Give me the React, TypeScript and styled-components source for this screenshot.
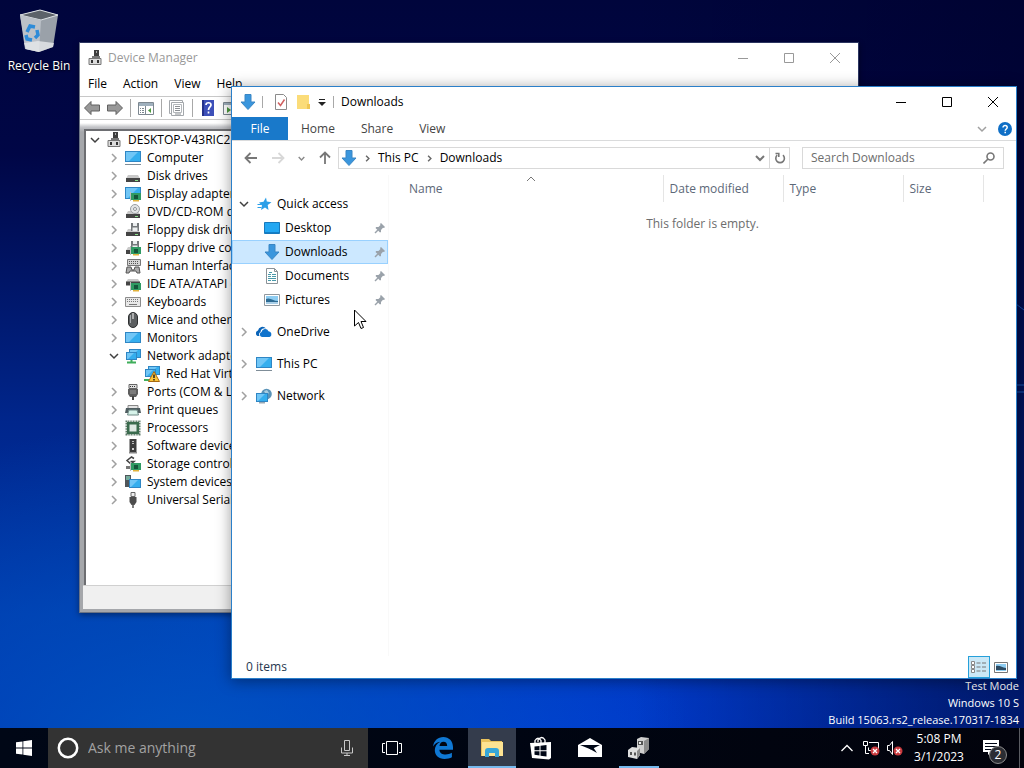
import React from "react";
import styled, { createGlobalStyle } from "styled-components";

const GlobalStyle = createGlobalStyle`
  * { box-sizing: border-box; }
  body {
    margin: 0;
    font-family: "Open Sans", "Noto Sans", sans-serif;
    font-size: 12px;
    line-height: 18px;
    color: #000;
  }
  button, input {
    margin: 0;
    padding: 0;
    border: 0;
    background: none;
    font: inherit;
    color: inherit;
  }
  svg { display: block; flex: none; }
`;

/* ---------- desktop ---------- */

const Screen = styled.div`
  display: flex;
  flex-direction: column;
  min-height: 100vh;
  background:
    linear-gradient(90deg, rgba(0, 0, 30, 0) 62%, rgba(0, 0, 40, 0.5) 100%),
    radial-gradient(ellipse 50% 45% at 18% 100%, rgba(0, 88, 196, 0.9), rgba(0, 70, 190, 0) 100%),
    radial-gradient(ellipse 45% 45% at 55% 100%, rgba(0, 62, 214, 0.9), rgba(0, 40, 190, 0) 100%),
    linear-gradient(180deg, #00053c 0%, #000646 20%, #00268c 55%, #0036aa 80%, #002cb0 100%);
`;

const Workspace = styled.main`
  position: relative;
  flex: 1;
  overflow: hidden;
`;

const DesktopIcon = styled.button`
  position: absolute;
  top: 8px;
  left: 1px;
  width: 76px;
  display: flex;
  flex-direction: column;
  align-items: center;
  gap: 3px;
  color: #fff;
  white-space: nowrap;
  text-shadow: 0 1px 2px #000;
`;

const LightStreaks = styled.svg`
  position: absolute;
  top: 300px;
  right: 0;
`;

const Watermark = styled.div`
  position: absolute;
  right: 5px;
  bottom: 0;
  color: #fff;
  font-size: 11px;
  text-align: right;
  line-height: 17px;
`;

const Pointer = styled.svg`
  position: absolute;
  left: 354px;
  top: 309px;
`;

/* ---------- window parts ---------- */

const TitleBar = styled.header<{ $muted?: boolean }>`
  display: flex;
  align-items: center;
  height: 30px;
  flex: none;
  color: ${(p) => (p.$muted ? "#999" : "#000")};
`;

const TitleText = styled.h1`
  flex: 1;
  margin: 0;
  font-size: 12px;
  font-weight: 400;
`;

const WindowButton = styled.button`
  display: flex;
  align-items: center;
  justify-content: center;
  width: 46px;
  height: 30px;
`;

const Chevron = ({ dir = "right", size = 9, color = "#a0a0a0", weight = 1.5 }: {
  dir?: "right" | "down" | "up"; size?: number; color?: string; weight?: number;
}) => {
  const d = { right: "M3 1l4 4-4 4", down: "M1 3l4 4 4-4", up: "M1 7l4-4 4 4" }[dir];
  return (
    <svg width={size} height={size} viewBox="0 0 10 10" fill="none" stroke={color} strokeWidth={weight}>
      <path d={d} />
    </svg>
  );
};

const WindowButtons = () => (
  <>
    <WindowButton aria-label="Minimize">
      <svg width="10" height="10" stroke="currentColor" fill="none"><path d="M0 5.5h10" /></svg>
    </WindowButton>
    <WindowButton aria-label="Maximize">
      <svg width="10" height="10" stroke="currentColor" fill="none"><path d="M.5.5h9v9h-9z" /></svg>
    </WindowButton>
    <WindowButton aria-label="Close">
      <svg width="10" height="10" stroke="currentColor" fill="none"><path d="M0 0l10 10M10 0L0 10" /></svg>
    </WindowButton>
  </>
);

/* ---------- device manager ---------- */

const DeviceWindow = styled.section`
  position: absolute;
  left: 79px;
  top: 42px;
  right: 165px;
  bottom: 115px;
  display: flex;
  flex-direction: column;
  border: 1px solid #6a7384;
  border-top-color: #2b3560;
  border-right-color: #2b3560;
  background: #fff;
  box-shadow: 0 2px 6px rgba(0, 0, 0, 0.4);
`;

const DeviceTitle = styled.div`
  display: flex;
  padding: 0 7px;
  width: 28px;
`;

const MenuBar = styled.nav`
  display: flex;
  height: 23px;
  align-items: center;
  padding-bottom: 2px;
`;

const MenuItem = styled.button`
  padding: 0 8px;
`;

const Tools = styled.div`
  display: flex;
  align-items: center;
  gap: 7px;
  height: 24px;
  padding-left: 4px;
  border-top: 1px solid #c8c8c8;
  border-bottom: 1px solid #c8c8c8;
`;

const Separator = styled.span<{ $height?: number }>`
  width: 1px;
  height: ${(p) => p.$height ?? 18}px;
  background: #a8a8a8;
`;

const DeviceBody = styled.div`
  flex: 1;
  display: flex;
  flex-direction: column;
  padding: 0 3px 3px;
  background: linear-gradient(180deg, #fff 0, #fff 3px, #c4c5c9 7px, #a5a7ab 12px, #a5a7ab 100%);
`;

const Tree = styled.ul`
  flex: 1;
  margin: 9px 0 0 1px;
  padding: 0;
  list-style: none;
  background: #fff;
  border-top: 2px solid #6d6e72;
  border-left: 2px solid #6d6e72;
`;

const TreeRow = styled.li<{ $level: number }>`
  display: flex;
  align-items: center;
  gap: 6px;
  height: 18px;
  padding-left: ${(p) => [4, 23, 58][p.$level]}px;
  white-space: nowrap;
`;

const TreeToggle = styled.button`
  display: flex;
  flex: none;
  justify-content: center;
  width: 10px;
`;

const DeviceStatus = styled.footer`
  height: 24px;
  background: #f0f0f0;
  border-top: 1px solid #d0d0d0;
`;

const Icon = ({ children, size = 16, box = 16 }: { children: React.ReactNode; size?: number; box?: number }) => (
  <svg width={size} height={size} viewBox={`0 0 ${box} ${box}`} aria-hidden="true">{children}</svg>
);

const Screen16 = ({ x = 0, y = 2, w = 16, h = 11 }) => (
  <>
    <path d={`M${x} ${y}h${w}v${h}h-${w}z`} fill="#2f86c4" />
    <path d={`M${x + 1} ${y + 1}h${w - 2}v${h - 2}h-${w - 2}z`} fill="#35aeee" />
    <path d={`M${x + 1} ${y + 1}h${w - 4}l-${h - 2} ${h - 2}h-${w - 2 - h}z`} fill="#71c6f6" />
  </>
);

const Drive = () => (
  <>
    <path d="M3 7h10l2 3.500H1z" fill="#c9c9c9" />
    <path d="M1 10h14v4H1z" fill="#444" />
    <path d="M10 12h3v1h-3z" fill="#8ce08c" />
  </>
);

const Board = () => (
  <>
    <path d="M6 7h10v7H6z" fill="#2f9a63" />
    <path d="M5 6h1v9H5z" fill="#bdbdbd" />
    <path d="M9 9h4v4H9z" fill="#14553a" />
    <path d="M8 14h6v1.500H8z" fill="#e2b33c" />
  </>
);

const Floppy = () => (
  <>
    <path d="M6 1h8v8H6z" fill="#75797b" />
    <path d="M8 1h4v3H8zM7.500 5.500h5V9h-5z" fill="#eceff0" />
  </>
);

const glyphs: Record<string, React.ReactNode> = {
  root: (
    <>
      <path d="M7 0h5v7H7z" fill="#3e3e3e" /><path d="M9 1h1v2H9z" fill="#aaa" />
      <path d="M5 6h8v3H5z" fill="#777" />
      <path d="M2 8.500h12v6H2z" fill="#dcdcdc" stroke="#777" />
      <path d="M4 10h2v3H4zM10 10h2v3h-2z" fill="#333" />
    </>
  ),
  computer: (<><Screen16 y={1} h={11} /><path d="M0 14h16v1H0z" fill="#7f8d98" /></>),
  disk: <Drive />,
  display: (<><Screen16 y={1} h={12} /><Board /></>),
  dvd: (
    <>
      <Drive />
      <circle cx="10" cy="5" r="4.500" fill="#e3e5e6" stroke="#9a9ea1" />
      <circle cx="10" cy="5" r="1.500" fill="#fff" stroke="#8d9194" />
    </>
  ),
  floppy: (<><Drive /><Floppy /></>),
  floppyController: (<><Drive /><Floppy /><Board /></>),
  hid: (
    <>
      <path d="M2.500 1.500h13v6h-13z" fill="#d5d5d5" stroke="#777" />
      <path d="M4 3.500h10M4 5.500h10" stroke="#555" strokeDasharray="1 1" />
      <path d="M1 15l1-6h4l1 3h2l1-3h4l1 6h-3l-1-2H5l-1 2z" fill="#ababab" stroke="#555" />
    </>
  ),
  ide: (
    <>
      <path d="M3 3h10l2 3H1z" fill="#c9c9c9" /><path d="M1 5.500h14v4H1z" fill="#444" /><Board />
    </>
  ),
  keyboard: (
    <>
      <path d="M.5 3.500h15v9H.5z" fill="#e8e8e8" stroke="#8c8c8c" />
      <path d="M2 5.500h12M2 7.500h12" stroke="#777" strokeDasharray="1 1" /><path d="M4 10.500h8" stroke="#777" />
    </>
  ),
  mouse: (
    <>
      <rect x="3.500" y=".5" width="9" height="15" rx="4.500" fill="#5c5f61" stroke="#2d2f30" />
      <path d="M8 1v6" stroke="#fff" /><path d="M5.500 3v8" stroke="#a8acae" />
    </>
  ),
  monitor: <Screen16 />,
  network: (
    <>
      <Screen16 x={4} y={1} w={12} h={9} /><Screen16 x={1} y={4} w={11} h={8} />
      <path d="M2 14.500h9M6.500 12v3" stroke="#3fae5a" strokeWidth="2" />
    </>
  ),
  warning: (
    <>
      <Screen16 x={4} y={0} w={12} h={9} /><Screen16 x={1} y={3} w={11} h={8} />
      <path d="M0 14h5" stroke="#3fae5a" strokeWidth="2" />
      <path d="M10 5.500l5.500 10h-11z" fill="#fbc53a" stroke="#a86a10" />
      <path d="M10 8.500v3.500M10 13v1.500" stroke="#222" strokeWidth="1.500" />
    </>
  ),
  port: (
    <>
      <path d="M4 .5h8v4H4z" fill="#e0e0e0" stroke="#666" /><path d="M5 2.500h6" stroke="#333" strokeDasharray="1 1" />
      <path d="M3 5h10v5l-2 3H5l-2-3z" fill="#5e5e5e" /><path d="M5 7h6M5 9h6" stroke="#999" />
      <path d="M8 12v4" stroke="#444" strokeWidth="2" />
    </>
  ),
  printer: (
    <>
      <path d="M3 3.500h10v3H3z" fill="#e4e4e4" stroke="#888" />
      <path d="M1 6h14l1 5h-3l-1-3H4l-1 3H0z" fill="#4f5d60" /><path d="M4 8h8l1.500 5h-11z" fill="#d7f3ea" stroke="#6f8a86" />
    </>
  ),
  cpu: (
    <>
      <path d="M1.500 1.500h13v13h-13z" fill="none" stroke="#5d7a68" strokeWidth="2" strokeDasharray="1 .6" />
      <path d="M2 2h12v12H2z" fill="#3a6b4d" /><path d="M4.500 4.500h7v7h-7z" fill="#dfe9e3" />
    </>
  ),
  software: (
    <>
      <path d="M4.500 1h7v13h-7z" fill="#3c3c3c" /><path d="M7 3.500h2M7 5.500h2" stroke="#bbb" />
      <path d="M4 14h8v1.500H4z" fill="#888" /><circle cx="8" cy="11" r="1" fill="#fff" />
    </>
  ),
  storage: (
    <>
      <path d="M9 2.500L6.500 1 2 4.500 6 8l3-2.500H5.500" fill="none" stroke="#444" strokeWidth="1.500" /><Board />
      <path d="M1 10h4v3H1z" fill="#777" />
    </>
  ),
  system: (
    <>
      <path d="M0 1h6v12H0z" fill="#50565a" /><path d="M1 3h4M1 5h4" stroke="#9fd" /><Screen16 x={4} y={5} w={12} h={9} />
    </>
  ),
  usb: (
    <>
      <path d="M6 .5h4v4H6z" fill="#eee" stroke="#666" /><path d="M4.500 5h7v5l-2 3h-3l-2-3z" fill="#4c4c4c" />
      <path d="M8 12v4" stroke="#555" strokeWidth="1.500" />
    </>
  ),
};

type Device = { name: string; icon: string; level?: number; open?: boolean };

const devices: Device[] = [
  { name: "DESKTOP-V43RIC2", icon: "root", level: 0, open: true },
  { name: "Computer", icon: "computer" },
  { name: "Disk drives", icon: "disk" },
  { name: "Display adapters", icon: "display" },
  { name: "DVD/CD-ROM drives", icon: "dvd" },
  { name: "Floppy disk drives", icon: "floppy" },
  { name: "Floppy drive controllers", icon: "floppyController" },
  { name: "Human Interface Devices", icon: "hid" },
  { name: "IDE ATA/ATAPI controllers", icon: "ide" },
  { name: "Keyboards", icon: "keyboard" },
  { name: "Mice and other", icon: "mouse" },
  { name: "Monitors", icon: "monitor" },
  { name: "Network adapters", icon: "network", open: true },
  { name: "Red Hat VirtIO", icon: "warning", level: 2 },
  { name: "Ports (COM & LPT)", icon: "port" },
  { name: "Print queues", icon: "printer" },
  { name: "Processors", icon: "cpu" },
  { name: "Software devices", icon: "software" },
  { name: "Storage controllers", icon: "storage" },
  { name: "System devices", icon: "system" },
  { name: "Universal Serial Bus controllers", icon: "usb" },
];

const ToolArrow = ({ back }: { back?: boolean }) => (
  <svg width="16" height="16" viewBox="0 0 16 16">
    <path d={back ? "M.5 8L7 1.500v3.500h8.500v6H7v3.500z" : "M15.500 8L9 1.500v3.500H.5v6H9v3.500z"} fill="#989898" stroke="#606060" />
  </svg>
);

const PanelGlyph = () => (
  <svg width="16" height="16" viewBox="0 0 16 16">
    <path d="M.5 2.500h15v12H.5z" fill="#fff" stroke="#7d8790" /><path d="M1 3h14v3H1z" fill="#9fb0bd" />
    <path d="M2 8.500h4M2 10.500h4M2 12.500h4" stroke="#7d8790" strokeDasharray="1 1 2" /><path d="M7.500 6v8" stroke="#7d8790" />
    <path d="M13 8v5l-3-2.500z" fill="#4c9a3c" />
  </svg>
);

const DeviceManager = () => (
  <DeviceWindow aria-label="Device Manager">
    <TitleBar $muted>
      <DeviceTitle><Icon>{glyphs.root}</Icon></DeviceTitle>
      <TitleText>Device Manager</TitleText>
      <WindowButtons />
    </TitleBar>
    <MenuBar>
      {["File", "Action", "View", "Help"].map((m) => <MenuItem key={m}>{m}</MenuItem>)}
    </MenuBar>
    <Tools>
      <button aria-label="Back"><ToolArrow back /></button>
      <button aria-label="Forward"><ToolArrow /></button>
      <Separator />
      <button aria-label="Show console tree"><PanelGlyph /></button>
      <Separator />
      <button aria-label="Properties">
        <svg width="16" height="16" viewBox="0 0 16 16">
          <path d="M.5.500h13v13H.5z" fill="#fff" stroke="#a3a7ab" /><path d="M2.500 2.500h12v13h-12z" fill="#fff" stroke="#a3a7ab" />
          <path d="M4.500 4.500h8v8h-8z" fill="none" stroke="#b4b8bc" /><path d="M6 6.500h5M6 8.500h5M6 10.500h5M6 14h6" stroke="#8b8f93" />
        </svg>
      </button>
      <Separator />
      <button aria-label="Help">
        <svg width="16" height="16" viewBox="0 0 16 16">
          <path d="M2 0h12v16H2z" fill="#3c4fb8" /><path d="M2 0h2v16H2z" fill="#24318a" />
          <path d="M6 5c0-3 5-3 5 0 0 2-2.500 2-2.500 5M8.500 11.500v2" fill="none" stroke="#fff" strokeWidth="1.700" />
        </svg>
      </button>
      <button aria-label="Scan for changes"><svg width="16" height="16" viewBox="0 0 16 16">
        <path d="M.5 2.500h15v12H.5z" fill="#fff" stroke="#7d8790" /><path d="M1 3h14v2H1z" fill="#9fb0bd" />
        <path d="M4 7v6l4-3z" fill="#4c9a3c" />
      </svg></button>
    </Tools>
    <DeviceBody>
      <Tree>
        {devices.map(({ name, icon, level = 1, open }) => (
          <TreeRow key={name} $level={level}>
            {level < 2 && (
              <TreeToggle aria-label={`Toggle ${name}`}>
                <Chevron dir={open ? "down" : "right"} size={10} color={open ? "#404040" : "#a0a0a0"} />
              </TreeToggle>
            )}
            <Icon>{glyphs[icon]}</Icon>
            <span>{name}</span>
          </TreeRow>
        ))}
      </Tree>
      <DeviceStatus />
    </DeviceBody>
  </DeviceWindow>
);

/* ---------- file explorer ---------- */

const ExplorerWindow = styled.section`
  position: absolute;
  left: 231px;
  top: 86px;
  right: 7px;
  bottom: 49px;
  display: flex;
  flex-direction: column;
  border: 1px solid #2a7fc9;
  background: #fff;
  box-shadow: 0 2px 14px rgba(0, 0, 0, 0.4);
`;

const QuickTools = styled.div`
  display: flex;
  align-items: center;
  gap: 6px;
  padding: 0 7px 0 8px;
`;

const Ribbon = styled.nav`
  display: flex;
  align-items: center;
  flex: none;
  height: 24px;
  border-bottom: 1px solid #dadbdc;
  color: #444;
`;

const RibbonTab = styled.button<{ $file?: boolean }>`
  height: 23px;
  padding: 0 13px;
  ${(p) => p.$file && "width: 56px; background: #1979ca; color: #fff;"}
`;

const RibbonEnd = styled.div`
  display: flex;
  align-items: center;
  gap: 11px;
  margin-left: auto;
  padding-right: 4px;
`;

const AddressRow = styled.div`
  display: flex;
  align-items: center;
  flex: none;
  height: 34px;
  padding: 0 12px;
`;

const NavButtons = styled.div`
  display: flex;
  align-items: center;
  gap: 13px;
  width: 94px;
`;

const AddressBox = styled.div`
  display: flex;
  align-items: center;
  flex: 1;
  gap: 7px;
  height: 22px;
  padding-left: 2px;
  border: 1px solid #d9d9d9;
`;

const Crumb = styled.a`
  color: #000;
  text-decoration: none;
`;

const AddressEnd = styled.div`
  display: flex;
  align-items: center;
  gap: 4px;
  margin-left: auto;
`;

const RefreshButton = styled.button`
  display: flex;
  align-items: center;
  justify-content: center;
  width: 20px;
  height: 20px;
  border-left: 1px solid #d9d9d9;
`;

const SearchBox = styled.label`
  display: flex;
  align-items: center;
  width: 202px;
  height: 22px;
  margin-left: 12px;
  padding: 0 8px;
  border: 1px solid #d9d9d9;
`;

const SearchInput = styled.input`
  flex: 1;
  min-width: 0;
  outline: none;
  &::placeholder { color: #6d6d6d; opacity: 1; }
`;

const ExplorerBody = styled.div`
  display: flex;
  flex: 1;
  min-height: 0;
`;

const NavPane = styled.ul`
  width: 156px;
  margin: 0;
  padding: 17px 0 0;
  list-style: none;
  flex: none;
`;

const NavItem = styled.li<{ $child?: boolean; $selected?: boolean; $spaced?: boolean }>`
  display: flex;
  align-items: center;
  gap: 5px;
  height: 24px;
  margin-top: ${(p) => (p.$spaced ? 8 : 0)}px;
  padding: 0 2px 0 ${(p) => (p.$child ? 32 : 7)}px;
  ${(p) => p.$selected && "background: #cce8ff; box-shadow: inset 0 0 0 1px #99d1ff;"}
`;

const NavToggle = styled.button`
  width: 12px;
`;

const NavLabel = styled.span`
  flex: 1;
`;

const FilePane = styled.div`
  flex: 1;
  border-left: 1px solid #f9f9f9;
`;

const FileTable = styled.table`
  width: 100%;
  table-layout: fixed;
  border-collapse: collapse;
`;

const ColumnHead = styled.th<{ $width?: number; $first?: boolean }>`
  position: relative;
  height: 27px;
  ${(p) => p.$width && `width: ${p.$width}px;`}
  padding: 0 0 0 ${(p) => (p.$first ? 20 : 6)}px;
  border-right: 1px solid #e5e5e5;
  color: #5c6878;
  font-weight: 400;
  text-align: left;
  white-space: nowrap;
  &:last-child { border-right: 0; }
`;

const SortMark = styled.span`
  position: absolute;
  left: 50%;
  top: -1px;
`;

const EmptyCell = styled.td`
  height: 44px;
  padding: 0;
  text-align: center;
  color: #6d6d6d;
`;

const ExplorerStatus = styled.footer`
  display: flex;
  align-items: center;
  justify-content: space-between;
  flex: none;
  height: 22px;
  padding: 0 4px 0 14px;
  color: #26374f;
`;

const ViewButtons = styled.div`
  display: flex;
`;

const ViewButton = styled.button<{ $active?: boolean }>`
  display: flex;
  align-items: center;
  justify-content: center;
  width: 22px;
  height: 22px;
  ${(p) => p.$active && "background: #cbe8f6; box-shadow: inset 0 0 0 1px #26a0da;"}
`;

const DownArrow = () => (
  <Icon><path d="M5 .5h6V8h4L8 15.500 1 8h4z" fill="#3a96dd" stroke="#3a86c4" /></Icon>
);

const Pin = () => (
  <svg width="12" height="12" viewBox="0 0 12 12">
    <path d="M7 1l4 4-1 1-1-.3L7 8l0 2-1 .5L1.500 6l.7-1 2.300 0L6.500 3 6 2z" fill="#9aa2aa" />
    <path d="M4 8l-3 3" stroke="#9aa2aa" strokeWidth="1.500" />
  </svg>
);

const PictureGlyph = () => (
  <Icon>
    <path d="M.5 2.500h15v11H.5z" fill="#fff" stroke="#90989e" /><path d="M2 4h12v8H2z" fill="#8ecdf2" />
    <path d="M2 7c4-2 7 2 12 2v3H2z" fill="#2d6b93" /><path d="M2 10h12v2H2z" fill="#a9cfe8" />
  </Icon>
);

const navIcons: Record<string, React.ReactNode> = {
  "Quick access": (
    <Icon>
      <path d="M10 1.500l.8 4 4.700.8-3.800 2.700.8 5L9 11.500 5 14l1-4.500L3 6.500l4.500-.7z" fill="#2a9fe8" />
      <path d="M1.500 8.500h4M1.500 11.500h4" stroke="#2a9fe8" />
    </Icon>
  ),
  Desktop: (<Icon><path d="M.5 2.500h15v11H.5z" fill="#23a7f2" stroke="#1779bd" /><path d="M1 12.500h14" stroke="#117fc7" /></Icon>),
  Downloads: <DownArrow />,
  Documents: (
    <Icon>
      <path d="M2.500.5h8l3 3v12h-11z" fill="#fff" stroke="#8b9297" /><path d="M10.500.5v3h3" fill="none" stroke="#8b9297" />
      <path d="M4 6.500h3M8 6.500h4M4 8.500h3M8 8.500h4M4 10.500h8M4 12.500h3M8 12.500h4M5 4.500h3" stroke="#4a9aaa" />
    </Icon>
  ),
  Pictures: <PictureGlyph />,
  OneDrive: (
    <Icon>
      <path d="M1.500 12A3 3 0 0 1 2 6.500a4.500 4.500 0 0 1 8-2A4 4 0 0 0 4.500 8 3 3 0 0 0 3.500 12z" fill="#0b64b8" />
      <path d="M6 13a2.600 2.600 0 0 1-.5-5 3.700 3.700 0 0 1 7-.8A3 3 0 0 1 13.500 13z" fill="#0f73cc" />
    </Icon>
  ),
  "This PC": <Icon>{glyphs.computer}</Icon>,
  Network: (
    <Icon>
      <circle cx="10.500" cy="6" r="5.300" fill="#5a93b8" /><path d="M8 3l3-1 2 3-3 2z" fill="#a9cde0" />
      <Screen16 x={0} y={5} w={12} h={9} /><path d="M3 14h6v1.500H3z" fill="#9ba9b4" />
    </Icon>
  ),
};

const navRows = [
  { name: "Quick access", open: true },
  { name: "Desktop", child: true },
  { name: "Downloads", child: true, selected: true },
  { name: "Documents", child: true },
  { name: "Pictures", child: true },
  { name: "OneDrive", spaced: true },
  { name: "This PC", spaced: true },
  { name: "Network", spaced: true },
];

const NavArrow = ({ d, color, size = 14 }: { d: string; color: string; size?: number }) => (
  <svg width={size} height={size} viewBox="0 0 14 14" fill="none" stroke={color} strokeWidth="1.800"><path d={d} /></svg>
);

const Explorer = () => (
  <ExplorerWindow aria-label="Downloads">
    <TitleBar>
      <QuickTools>
        <DownArrow />
        <Separator $height={12} />
        <span />
        <button aria-label="Properties">
          <svg width="12" height="16" viewBox="0 0 12 16">
            <path d="M.5.5h8l3 3v12H.5z" fill="#fff" stroke="#8b8b8b" />
            <path d="M3 8.500l2.500 3 4-6" fill="none" stroke="#d06060" strokeWidth="1.500" />
          </svg>
        </button>
        <button aria-label="New folder">
          <svg width="18" height="16" viewBox="0 0 18 16">
            <path d="M4 1h12v10l1 4H4z" fill="#fbdc79" /><path d="M14 10h3v5h-3z" fill="#efc654" />
          </svg>
        </button>
        <button aria-label="Customize quick access">
          <svg width="10" height="10" viewBox="0 0 10 10"><path d="M2 2.500h6" stroke="#222" /><path d="M1 5h8L5 9z" fill="#222" /></svg>
        </button>
        <Separator $height={12} />
      </QuickTools>
      <TitleText>Downloads</TitleText>
      <WindowButtons />
    </TitleBar>
    <Ribbon>
      <RibbonTab $file>File</RibbonTab>
      <RibbonTab>Home</RibbonTab>
      <RibbonTab>Share</RibbonTab>
      <RibbonTab>View</RibbonTab>
      <RibbonEnd>
        <button aria-label="Expand the ribbon"><Chevron dir="down" size={10} /></button>
        <button aria-label="Help">
          <svg width="14" height="14" viewBox="0 0 14 14">
            <circle cx="7" cy="7" r="7" fill="#0f6fc6" />
            <path d="M5 5.500c0-2.700 4.200-2.500 4.200 0C9.200 7 7.200 7 7.200 8.800M7.200 9.800v1.500" fill="none" stroke="#fff" strokeWidth="1.500" />
          </svg>
        </button>
      </RibbonEnd>
    </Ribbon>
    <AddressRow>
      <NavButtons>
        <button aria-label="Back"><NavArrow color="#777" d="M13 7H2M6.500 2L1.500 7l5 5" /></button>
        <button aria-label="Forward"><NavArrow color="#d8d8d8" d="M1 7h11M7.500 2l5 5-5 5" /></button>
        <button aria-label="Recent locations"><Chevron dir="down" size={7} color="#888" weight={2} /></button>
        <button aria-label="Up"><NavArrow color="#777" d="M7 13V2M2 6.500l5-5 5 5" /></button>
      </NavButtons>
      <AddressBox>
        <DownArrow />
        <Chevron size={7} color="#666" weight={2} />
        <Crumb href="#pc">This PC</Crumb>
        <Chevron size={7} color="#666" weight={2} />
        <Crumb href="#downloads">Downloads</Crumb>
        <AddressEnd>
          <button aria-label="Previous locations"><Chevron dir="down" size={10} color="#777" weight={2} /></button>
          <RefreshButton aria-label="Refresh">
            <svg width="12" height="12" viewBox="0 0 12 12" fill="none" stroke="#777" strokeWidth="1.600">
              <path d="M9 3.200A4.300 4.300 0 1 1 3.200 3.200M1.500 1.500h3.300v3.500" />
            </svg>
          </RefreshButton>
        </AddressEnd>
      </AddressBox>
      <SearchBox>
        <SearchInput aria-label="Search Downloads" placeholder="Search Downloads" />
        <svg width="12" height="12" viewBox="0 0 12 12" fill="none" stroke="#777" strokeWidth="1.600">
          <circle cx="7.500" cy="4.500" r="3.500" /><path d="M5 7l-4.500 4.500" />
        </svg>
      </SearchBox>
    </AddressRow>
    <ExplorerBody>
      <NavPane>
        {navRows.map((r) => (
          <NavItem key={r.name} $child={r.child} $selected={r.selected} $spaced={r.spaced}>
            {!r.child && (
              <NavToggle aria-label={`Toggle ${r.name}`}>
                <Chevron dir={r.open ? "down" : "right"} size={10} color={r.open ? "#404040" : "#a0a0a0"} />
              </NavToggle>
            )}
            {navIcons[r.name]}
            <NavLabel>{r.name}</NavLabel>
            {r.child && <Pin />}
          </NavItem>
        ))}
      </NavPane>
      <FilePane>
        <FileTable>
          <thead>
            <tr>
              <ColumnHead $first>Name<SortMark><Chevron dir="up" size={10} color="#777" weight={1} /></SortMark></ColumnHead>
              <ColumnHead $width={120}>Date modified</ColumnHead>
              <ColumnHead $width={120}>Type</ColumnHead>
              <ColumnHead $width={80}>Size</ColumnHead>
              <ColumnHead as="td" $width={33} />
            </tr>
          </thead>
          <tbody>
            <tr><EmptyCell colSpan={5}>This folder is empty.</EmptyCell></tr>
          </tbody>
        </FileTable>
      </FilePane>
    </ExplorerBody>
    <ExplorerStatus>
      <span>0 items</span>
      <ViewButtons>
        <ViewButton $active aria-label="Details view">
          <Icon>
            <path d="M.5 2.500h3v3h-3zM.5 6.500h3v3h-3zM.5 10.500h3v3h-3z" fill="#fff" stroke="#888" />
            <path d="M5.500 4h4M11 4h4M5.500 8h4M11 8h4M5.500 12h4M11 12h4" stroke="#777" />
          </Icon>
        </ViewButton>
        <ViewButton aria-label="Large icons view">
          <svg width="14" height="11" viewBox="0 0 14 11">
            <path d="M.5.5h13v10H.5z" fill="#fff" stroke="#777" /><path d="M2 2h10v7H2z" fill="#8ecdf2" />
            <path d="M2 4c4-1 6 2 10 2v2H2z" fill="#2d4b63" />
          </svg>
        </ViewButton>
      </ViewButtons>
    </ExplorerStatus>
  </ExplorerWindow>
);

/* ---------- taskbar ---------- */

const Bar = styled.footer`
  display: flex;
  flex: none;
  height: 40px;
  background: linear-gradient(90deg, #000716 0%, #000512 50%, #02030c 100%);
  color: #fff;
`;

const TaskButton = styled.button<{ $active?: boolean; $running?: boolean; $gap?: number }>`
  display: flex;
  align-items: center;
  justify-content: center;
  width: 48px;
  height: 40px;
  margin-right: ${(p) => p.$gap ?? 1}px;
  background-color: ${(p) => (p.$active ? "#343c4c" : "transparent")};
  background-image: ${(p) => (p.$active || p.$running ? "linear-gradient(#76b9ed, #76b9ed)" : "none")};
  background-size: ${(p) => (p.$active ? "100%" : "40px")} 2px;
  background-position: bottom center;
  background-repeat: no-repeat;
`;

const Cortana = styled.label`
  display: flex;
  align-items: center;
  gap: 9px;
  width: 320px;
  padding: 0 15px 0 9px;
  background: #333;
`;

const CortanaInput = styled.input`
  flex: 1;
  min-width: 0;
  outline: none;
  font-size: 14px;
  &::placeholder { color: #a2a2a2; opacity: 1; }
`;

const Tray = styled.div`
  display: flex;
  align-items: center;
  gap: 6px;
  margin-left: auto;
`;

const TrayExpand = styled.button`
  padding-right: 4px;
`;

const Clock = styled.button`
  width: 60px;
  line-height: 18px;
`;

const ActionCenter = styled.button`
  position: relative;
  display: flex;
  justify-content: center;
  width: 32px;
  margin-right: 6px;
`;

const Badge = styled.span`
  position: absolute;
  left: 14px;
  top: 6px;
  width: 18px;
  height: 18px;
  border: 1px solid #8b8b8b;
  border-radius: 50%;
  background: #2b2d33;
  line-height: 16px;
`;

const ShowDesktop = styled.button`
  width: 5px;
  height: 40px;
  border-left: 1px solid #5a5c62;
`;

const RedCross = ({ x, y }: { x: number; y: number }) => (
  <>
    <circle cx={x} cy={y} r="4.500" fill="#c93a3e" stroke="none" />
    <path d={`M${x - 2} ${y - 2}l4 4M${x + 2} ${y - 2}l-4 4`} stroke="#fff" strokeWidth="1.300" />
  </>
);

const Taskbar = () => (
  <Bar>
    <TaskButton aria-label="Start" $gap={0}>
      <svg width="16" height="16" viewBox="0 0 16 16" fill="#fff">
        <path d="M0 2.300l6.500-.9v6.200H0zM7.300 1.300L16 0v7.600H7.300zM0 8.400h6.500v6.200L0 13.700zM7.300 8.400H16V16l-8.700-1.300z" />
      </svg>
    </TaskButton>
    <Cortana>
      <svg width="22" height="22" viewBox="0 0 22 22"><circle cx="11" cy="11" r="9.200" fill="none" stroke="#fff" strokeWidth="2.500" /></svg>
      <CortanaInput aria-label="Ask me anything" placeholder="Ask me anything" />
      <svg width="12" height="18" viewBox="0 0 12 18" fill="none" stroke="#c8c8c8">
        <path d="M3.500 1.500h5v10h-5zM.5 8.500v5.500h11V8.500M6 14v3M3 16.500h6" />
      </svg>
    </Cortana>
    <TaskButton aria-label="Task view" $gap={3}>
      <svg width="20" height="16" viewBox="0 0 20 16" fill="none" stroke="#fff">
        <path d="M4.500 1.500h11v13h-11zM3 3.500H.5v9H3M17 3.500h2.500v9H17" />
      </svg>
    </TaskButton>
    <TaskButton aria-label="Edge">
      <svg width="20" height="22" viewBox="0 0 20 22">
        <path d="M0 9.500C.8 3.700 5 0 10.300 0 16 0 20 4.300 20 10v2.700H6.400c.2 3.300 3 4.800 6.200 4.800 2.300 0 4.400-.6 6.300-1.700v4.500c-2 1.200-4.600 1.700-7.400 1.700C5.700 22 1.800 18.500 1.800 13.300c0-3.800 2-7 5.500-8.600C4 5 1.600 6.800 0 9.500zM6.500 8.900h7.700c0-2.700-1.400-4.200-3.700-4.200-2.200 0-3.700 1.600-4 4.200z" fill="#0f78d4" />
      </svg>
    </TaskButton>
    <TaskButton aria-label="File Explorer" $active>
      <svg width="22" height="20" viewBox="0 0 22 20">
        <path d="M0 1h8l2 2h11v15H0z" fill="#e9c25c" /><path d="M1 4h21v14H1z" fill="#fde392" />
        <path d="M4 19v-6c0-2 1-3 3-3h8c2 0 3 1 3 3v6h-4v-4H8v4z" fill="#37a7d9" />
      </svg>
    </TaskButton>
    <TaskButton aria-label="Store">
      <svg width="22" height="24" viewBox="0 0 22 24">
        <path d="M5 7V4.500Q8 0 11 4.500V7M8 6V4q4-5 7 0v3" fill="none" stroke="#fff" strokeWidth="1.300" />
        <path d="M0 7l21-1v16l-2 1.500L2 22z" fill="#fff" />
        <path d="M4.500 10.500l5-.6v4.300h-5zM10.500 9.800l6-.8v5.200h-6zM4.500 15.200h5v4.300l-5-.7zM10.500 15.200h6v5.300l-6-.8z" fill="#000716" />
      </svg>
    </TaskButton>
    <TaskButton aria-label="Mail">
      <svg width="24" height="20" viewBox="0 0 24 20">
        <path d="M0 7L12 0l12 7v12H0z" fill="#fff" /><path d="M2 7h20l-9 4.500z" fill="#000716" />
        <path d="M11 10.500l8 4.500-4-6z" fill="#000716" />
      </svg>
    </TaskButton>
    <TaskButton aria-label="Device Manager" $running>
      <svg width="22" height="22" viewBox="0 0 22 22">
        <path d="M9 2l4-2 8 1v11l-5 5-7-2z" fill="#cfcfcf" /><path d="M16 4l5-3v11l-5 5z" fill="#8b8b8b" />
        <path d="M10 4h5v4h-5z" fill="#555" /><path d="M11 5h2v2h-2z" fill="#eee" />
        <path d="M0 13l4-3 8 1v7l-3 4-9-2z" fill="#dedede" /><path d="M9 14l3-3v7l-3 4z" fill="#8b8b8b" />
        <path d="M2 15h2v3H2zM6 15.500h2v3H6z" fill="#555" />
      </svg>
    </TaskButton>
    <Tray>
      <TrayExpand aria-label="Show hidden icons">
        <svg width="12" height="8" viewBox="0 0 12 8" fill="none" stroke="#fff" strokeWidth="1.300"><path d="M.5 7L6 1.500 11.500 7" /></svg>
      </TrayExpand>
      <button aria-label="Network">
        <svg width="17" height="16" viewBox="0 0 17 16" fill="none" stroke="#fff">
          <path d="M.5 1.500h4v4h-4zM6 2.500h9.500v8H5.500v-3M2.500 5.500v8H6" /><RedCross x={12} y={11} />
        </svg>
      </button>
      <button aria-label="Volume">
        <svg width="17" height="16" viewBox="0 0 17 16" fill="none" stroke="#fff">
          <path d="M1.500 5.500h2l3-4v13l-3-4h-2z" /><RedCross x={12} y={11} />
        </svg>
      </button>
      <Clock>5:08 PM<br />3/1/2023</Clock>
      <ActionCenter aria-label="Notifications">
        <svg width="16" height="16" viewBox="0 0 16 16">
          <path d="M0 0h16v12H8l-3 3v-3H0z" fill="#fff" /><path d="M2 3.500h12M2 6.500h12M2 9.500h8" stroke="#000716" />
        </svg>
        <Badge>2</Badge>
      </ActionCenter>
      <ShowDesktop aria-label="Show desktop" />
    </Tray>
  </Bar>
);

const App = () => (
  <Screen>
    <GlobalStyle />
    <Workspace>
      <LightStreaks width="8" height="140" viewBox="0 0 8 140" fill="none">
        <path d="M0 4l8 6" stroke="#1560c8" opacity=".7" /><path d="M0 85h8M0 92h8" stroke="#2a7fe0" opacity=".6" />
      </LightStreaks>
      <DesktopIcon>
        <svg width="40" height="46" viewBox="0 0 40 46">
          <path d="M1 7l20-5 18 5-5 32-14 5-13-3z" fill="#9aa1a9" />
          <path d="M1 7l20-5 18 5-17 5z" fill="#5c6269" stroke="#dfe3e6" />
          <path d="M1 7l21 5-2 32-14-3z" fill="#bcc1c8" />
          <path d="M5 35l14-2 16 2-1 4-14 5-13-3z" fill="#e6e8eb" opacity=".8" />
          <g fill="none" stroke="#2e8bd8" strokeWidth="3.500">
            <path d="M8 24l3-6 5 1M18 22l1 5-3 3M13 32l-5-1-1-4" />
          </g>
        </svg>
        Recycle Bin
      </DesktopIcon>
      <Watermark>
        <div>Test Mode</div>
        <div>Windows 10 S</div>
        <div>Build 15063.rs2_release.170317-1834</div>
      </Watermark>
      <DeviceManager />
      <Explorer />
      <Pointer width="13" height="21" viewBox="0 0 13 21">
        <path d="M.5 1v16l4-3.500 2.500 6 2.500-1-2.500-6H12z" fill="#fff" stroke="#000" />
      </Pointer>
    </Workspace>
    <Taskbar />
  </Screen>
);

export default App;
